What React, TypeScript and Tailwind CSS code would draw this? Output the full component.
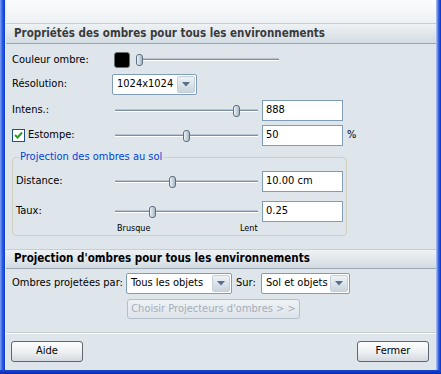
import React from "react";

const font = { fontFamily: '"DejaVu Sans Condensed", "Liberation Sans", Arial, sans-serif' };

function Track({ width, thumb }: { width: number; thumb: number }) {
  return (
    <div className="relative h-[14px] shrink-0" style={{ width }}>
      <div className="absolute left-0 right-0 top-[5px] h-[1px] bg-[#b7c3ce]" />
      <div className="absolute left-0 right-0 top-[6px] h-[1px] bg-[#7d91a4]" />
      <div className="absolute left-0 right-0 top-[7px] h-[1px] bg-white" />
      <div
        className="absolute top-[1px] h-[12px] w-[7px] rounded-[3px] border border-[#5d6f80] bg-gradient-to-r from-[#eef2f6] via-[#c9d4de] to-[#a7b6c4]"
        style={{ left: thumb }}
      />
    </div>
  );
}

function Input({ value }: { value: string }) {
  return (
    <div className="flex h-[21px] w-[81px] shrink-0 items-center whitespace-nowrap border border-[#7f9db9] bg-white pl-[3px] text-[11px] text-black">
      {value}
    </div>
  );
}

function Arrow() {
  return (
    <div className="flex h-full w-[18px] shrink-0 items-center justify-center rounded-[2px] border border-[#c3cfdb] bg-gradient-to-b from-[#eef2f6] to-[#c9d4de]">
      <svg width="8" height="5" viewBox="0 0 8 5">
        <path d="M0 0 L8 0 L4 4.5 Z" fill="#5a6f8c" />
      </svg>
    </div>
  );
}

function Select({ value, width }: { value: string; width: number }) {
  return (
    <div
      className="flex h-[21px] shrink-0 items-stretch rounded-[2px] border border-[#7f9db9] bg-white p-[1px]"
      style={{ width }}
    >
      <div className="flex flex-1 items-center overflow-hidden whitespace-nowrap pl-[3px] text-[11px] text-black">
        {value}
      </div>
      <Arrow />
    </div>
  );
}

function Button({ label }: { label: string }) {
  return (
    <div className="flex h-[21px] w-[72px] items-center justify-center rounded-[3px] border border-[#5f666e] bg-gradient-to-b from-[#fdfdfd] via-[#eef1f4] to-[#d3d9df] text-[11px] text-black">
      {label}
    </div>
  );
}

export default function App() {
  return (
    <div className="flex h-[374px] w-[441px] flex-col bg-[#0b35c8]" style={font}>
      <div className="flex flex-1">
        <div className="w-[5px] bg-gradient-to-r from-[#7f9cf0] via-[#2a5ce6] to-[#0a35d0]" />
        <div className="flex w-[1px] bg-[#e8eef4]" />
        <div className="flex flex-1 flex-col bg-[#dee5eb]">
          <div className="h-[24px] border-b border-[#c6cdd3] bg-gradient-to-b from-[#fbfcfd] to-[#eef1f4]" />
          <div className="flex h-[20px] items-center whitespace-nowrap border-b border-[#9ba7b1] bg-gradient-to-b from-[#eef2f5] to-[#d3dce3] pl-[8px] text-[11.5px] font-bold text-[#3b3b3b]">
            Propriétés des ombres pour tous les environnements
          </div>
          <div className="flex flex-col whitespace-nowrap pl-[6px] text-[11px] text-black">
            <div className="mt-[8px] flex h-[16px] items-center">
              <div className="w-[102px]">Couleur ombre:</div>
              <div className="h-[16px] w-[16px] rounded-[3px] border border-[#6d6d6d] bg-black" />
              <div className="ml-[6px]">
                <Track width={143} thumb={0} />
              </div>
            </div>
            <div className="mt-[6px] flex h-[21px] items-center">
              <div className="w-[100px]">Résolution:</div>
              <Select value="1024x1024" width={85} />
            </div>
            <div className="mt-[5px] flex h-[21px] items-center">
              <div className="w-[103px]">Intens.:</div>
              <Track width={143} thumb={118} />
              <div className="ml-[4px]">
                <Input value="888" />
              </div>
            </div>
            <div className="mt-[4px] flex h-[21px] items-center">
              <div className="flex h-[13px] w-[13px] items-center justify-center border border-[#1c5180] bg-white">
                <svg width="9" height="9" viewBox="0 0 9 9">
                  <path d="M1 4 L3.5 6.5 L8 1.5" stroke="#21a121" strokeWidth="2" fill="none" />
                </svg>
              </div>
              <div className="ml-[3px] w-[87px]">Estompe:</div>
              <Track width={143} thumb={68} />
              <div className="ml-[4px]">
                <Input value="50" />
              </div>
              <div className="ml-[4px]">%</div>
            </div>
            <div className="relative mt-[11px] h-[79px] w-[335px] rounded-[4px] border border-[#d0d0bf]">
              <div className="absolute left-[6px] top-[-8px] bg-[#dee5eb] px-[1px] text-[11px] leading-[14px] text-[#0046d5]">
                Projection des ombres au sol
              </div>
              <div className="mt-[13px] flex h-[21px] items-center pl-[3px]">
                <div className="w-[99px]">Distance:</div>
                <Track width={143} thumb={54} />
                <div className="ml-[4px]">
                  <Input value="10.00 cm" />
                </div>
              </div>
              <div className="mt-[9px] flex h-[21px] items-center pl-[3px]">
                <div className="w-[99px]">Taux:</div>
                <Track width={143} thumb={34} />
                <div className="ml-[4px]">
                  <Input value="0.25" />
                </div>
              </div>
              <div className="flex h-[11px] items-center pl-[104px] text-[9px] leading-[10px]">
                <div className="w-[123px]">Brusque</div>
                <div>Lent</div>
              </div>
            </div>
          </div>
          <div className="mt-[13px] flex h-[20px] items-center whitespace-nowrap border-y border-t-[#c6cdd3] border-b-[#9ba7b1] bg-gradient-to-b from-[#eef2f5] to-[#d3dce3] pl-[8px] text-[11.5px] font-bold text-black">
            Projection d'ombres pour tous les environnements
          </div>
          <div className="flex flex-col whitespace-nowrap pl-[6px] text-[11px] text-black">
            <div className="mt-[4px] flex h-[21px] items-center">
              <div className="w-[114px]">Ombres projetées par:</div>
              <Select value="Tous les objets" width={106} />
              <div className="ml-[4px] w-[25px]">Sur:</div>
              <Select value="Sol et objets" width={89} />
            </div>
            <div className="mt-[5px] flex h-[20px] pl-[115px]">
              <div className="flex h-[20px] w-[173px] items-center justify-center rounded-[3px] border border-[#b5bfc9] bg-gradient-to-b from-[#eef2f5] to-[#dde4ea] text-[11px] text-[#a6afb8]">
                Choisir Projecteurs d'ombres &gt; &gt;
              </div>
            </div>
          </div>
          <div className="mt-[13px] h-[1px] bg-[#c6cdd3]" />
          <div className="h-[1px] bg-white" />
          <div className="flex flex-1 items-start justify-between pl-[5px] pr-[7px] pt-[7px]">
            <Button label="Aide" />
            <Button label="Fermer" />
          </div>
        </div>
        <div className="w-[5px] bg-gradient-to-r from-[#b7c8f2] via-[#3a66e0] to-[#0a2dbf]" />
      </div>
      <div className="h-[4px] bg-gradient-to-b from-[#1a45d8] to-[#0a2aa8]" />
    </div>
  );
}
